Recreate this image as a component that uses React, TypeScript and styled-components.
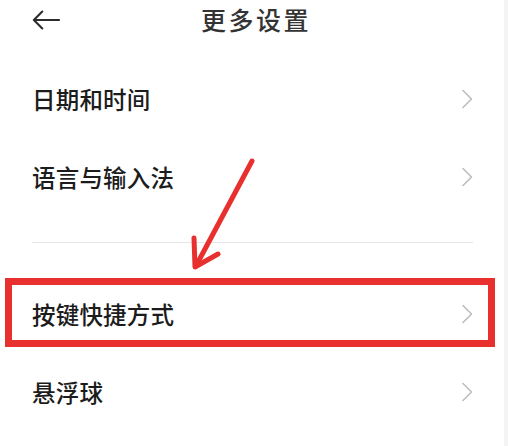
import styled, { createGlobalStyle, css } from "styled-components"

const GlobalStyle = createGlobalStyle`
  html, body {
    margin: 0;
    padding: 0;
    background: #fff;
  }
  body {
    font-family: "Noto Sans CJK SC", "Noto Sans", sans-serif;
  }
`

const Page = styled.div`
  position: relative;
  width: 508px;
  height: 446px;
  overflow: hidden;
  background: #fff;
  border-right: 4px solid #f4f4f4;
  box-sizing: border-box;
`

const Header = styled.header`
  height: 40px;
  display: grid;
  grid-template-columns: 60px 1fr 60px;
  align-items: center;
`

const BackButton = styled.button`
  border: 0;
  background: none;
  padding: 0 0 0 32px;
  display: flex;
  align-items: center;
  height: 40px;
  cursor: pointer;
`

const Title = styled.h1`
  margin: 0;
  text-align: center;
  font-size: 25px;
  font-weight: 500;
  letter-spacing: 2.5px;
  color: #333;
  line-height: 40px;
  transform: translate(4px, -1px);
`

const List = styled.ul`
  list-style: none;
  margin: 0;
  padding: 20px 0 0;
`

const Row = styled.li<{ $highlight?: boolean }>`
  position: relative;
  height: 78px;
  display: flex;
  align-items: center;
  justify-content: space-between;
  padding: 0 31px 0 32px;
  ${(p) =>
    p.$highlight &&
    css`
      &::after {
        content: "";
        position: absolute;
        top: 3px;
        left: 5px;
        right: 9px;
        bottom: 6px;
        border: 7px solid #e8312e;
      }
    `}
`

const Label = styled.span`
  font-size: 23.5px;
  font-weight: 500;
  color: #1c1c1c;
  letter-spacing: 0.2px;
`

const Divider = styled.li`
  height: 1px;
  background: #e6e6e6;
  margin: 26px 31px 32px 32px;
`

const Pointer = styled.svg`
  position: absolute;
  left: 0;
  top: 0;
  pointer-events: none;
`

function Chevron() {
  return (
    <svg width="12" height="20" viewBox="0 0 12 20">
      <path d="M2 1.5 L10.5 10 L2 18.5" fill="none" stroke="#bdbdbd" strokeWidth="1.6" strokeLinecap="round" strokeLinejoin="round" />
    </svg>
  )
}

const items = [
  { label: "日期和时间" },
  { label: "语言与输入法" },
]

const moreItems = [
  { label: "按键快捷方式", highlight: true },
  { label: "悬浮球" },
]

export default function App() {
  return (
    <>
      <GlobalStyle />
      <Page>
        <Header>
          <BackButton aria-label="返回">
            <svg width="30" height="22" viewBox="0 0 30 22">
              <path d="M29 11 H3 M11 2 L2 11 L11 20" fill="none" stroke="#2b2b2b" strokeWidth="2.2" strokeLinecap="round" strokeLinejoin="round" />
            </svg>
          </BackButton>
          <Title>更多设置</Title>
          <span />
        </Header>
        <List>
          {items.map((it) => (
            <Row key={it.label}>
              <Label>{it.label}</Label>
              <Chevron />
            </Row>
          ))}
          <Divider />
          {moreItems.map((it) => (
            <Row key={it.label} $highlight={it.highlight}>
              <Label>{it.label}</Label>
              <Chevron />
            </Row>
          ))}
        </List>
        <Pointer width="508" height="446" viewBox="0 0 508 446">
          <path d="M252 161 L197 264" fill="none" stroke="#e8312e" strokeWidth="5" strokeLinecap="round" />
          <path d="M194 238 L195 267 L218 254" fill="none" stroke="#e8312e" strokeWidth="5" strokeLinecap="round" strokeLinejoin="round" />
        </Pointer>
      </Page>
    </>
  )
}
